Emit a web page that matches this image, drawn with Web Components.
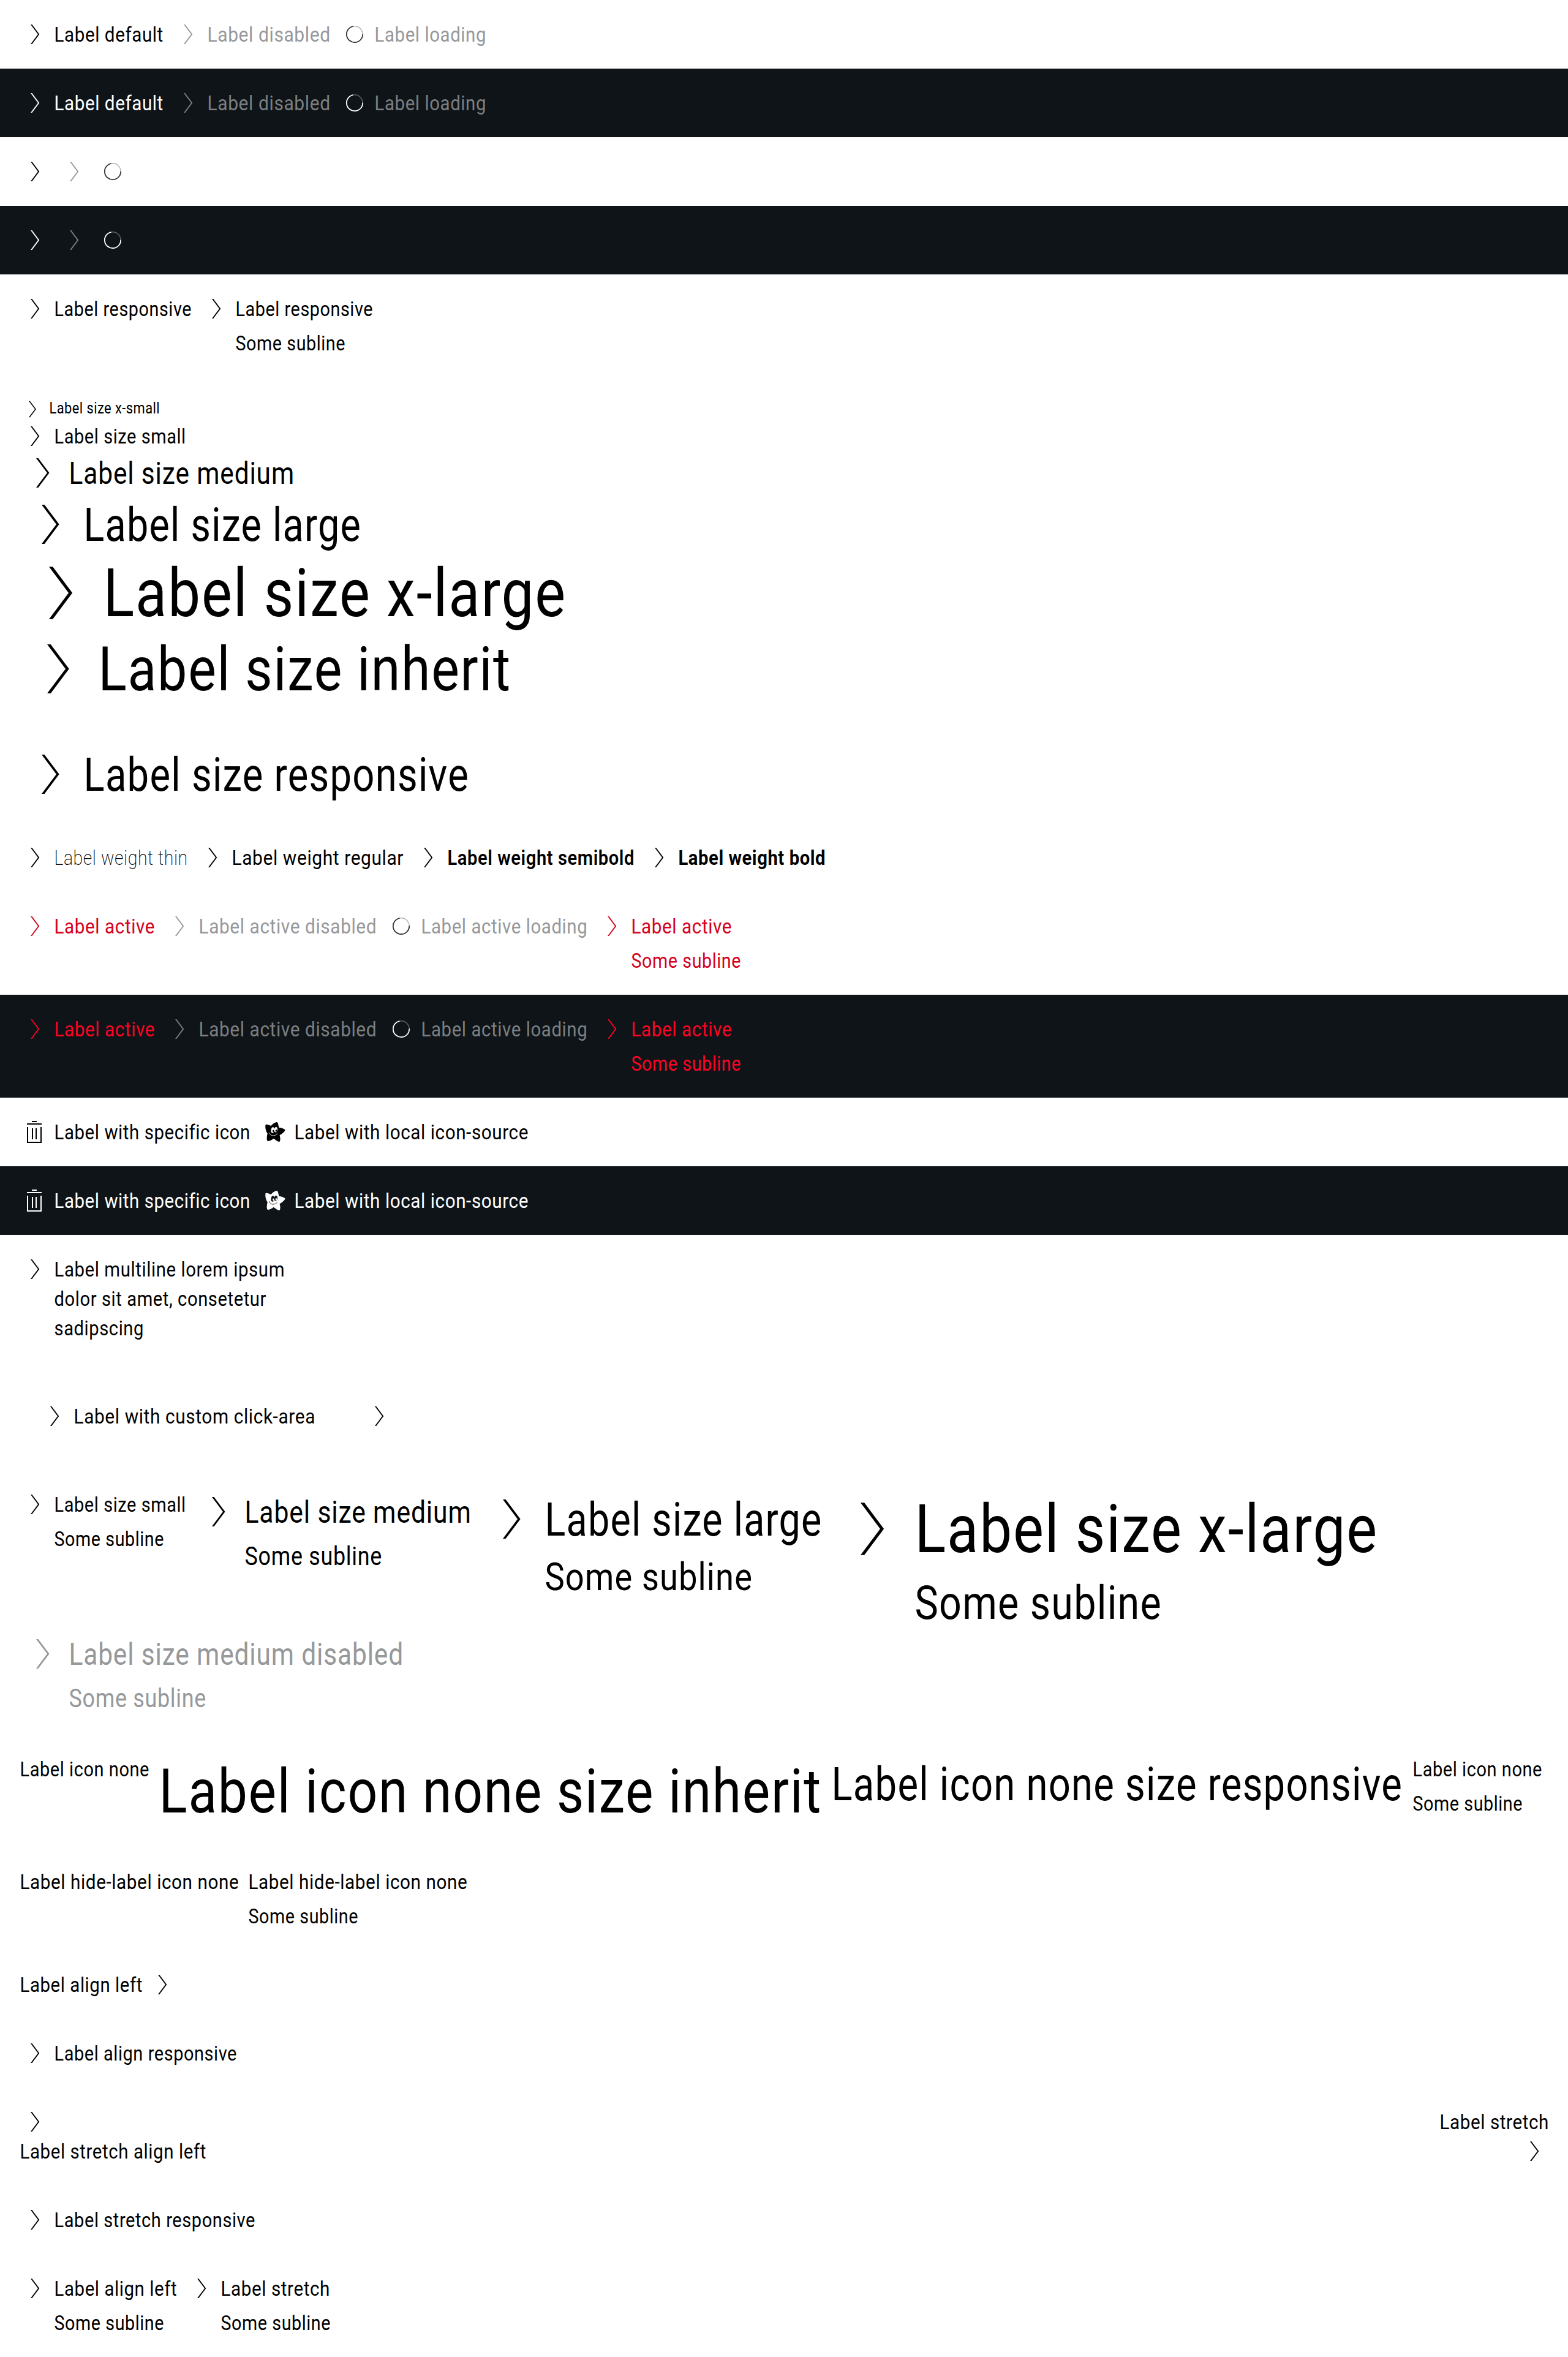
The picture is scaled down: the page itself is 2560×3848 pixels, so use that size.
<!DOCTYPE html>
<html lang="en">
<head>
<meta charset="utf-8">
<title>Link pure</title>
<style>
html, body { margin: 0; padding: 0; background: #fff; }
body { font-family: Roboto, "Liberation Sans", sans-serif; }
</style>
</head>
<body>
<link-gallery></link-gallery>
<script>
// Text run set to a fixed advance width.
class FitText extends HTMLElement {
  connectedCallback() {
    const w = parseFloat(this.getAttribute('w'));
    const root = this.attachShadow({ mode: 'open' });
    root.innerHTML = `<style>
      :host { display: block; width: ${w}px; height: 1lh; white-space: nowrap; }
      span { display: inline-block; vertical-align: top; font-size: 1.05em; letter-spacing: .02em; transform-origin: 0 0; }
    </style><span><slot></slot></span>`;
    const run = root.querySelector('span');
    const natural = run.getBoundingClientRect().width;
    if (natural > 0) run.style.transform = `translate(.5px, 1px) scaleX(${(w + 0.5) / natural})`;
  }
}

const ICONS = {
  arrow: '<path fill="currentColor" d="M18 8h2.3l12 16-12 16H18l12-16z"/>',
  trash: '<path fill="currentColor" d="M20 6h8v2h-8zM12 10h24v2H12zM12 16h2v24h20V16h2v26H12zM20 18h2v18h-2zM26 18h2v18h-2z"/>',
  star: '<path fill="currentColor" d="M9.400 13.200C9.200 11 12 11.400 18.500 14C21 11.500 23.500 9 27.300 8.100C29.800 7.800 30 10.500 31.500 17C35 17.300 39 18.200 41.300 20.200C42.500 21.500 38 26.500 32.500 29.300C33.600 33 34 36 33 39.300C31.500 41.300 27 38 22.800 34.800C20 37 16 39.400 13 38.900C11.200 38 11.300 32 12.800 26.500C10.500 23.500 8.800 18 9.400 13.200Z"/><g fill="var(--surface)"><ellipse cx="21.300" cy="21" rx="2.700" ry="4.800" transform="rotate(8 21.300 21)"/><ellipse cx="26.400" cy="20.300" rx="2.500" ry="4.300" transform="rotate(8 26.400 20.300)"/></g><g fill="currentColor"><ellipse cx="22.300" cy="22.600" rx="1.300" ry="2"/><ellipse cx="26.900" cy="22" rx="1.200" ry="1.900"/></g><path d="M15.800 25.200C17 31.500 25 31.500 29.200 26.500" fill="none" stroke="var(--surface)" stroke-width=".9"/>',
  loading: '<circle cx="24" cy="24" r="13.200" fill="none" stroke="var(--track)" stroke-width="1.500"/><path d="M37.200 23.500A13.200 13.200 0 1 1 21.500 11" fill="none" stroke="var(--spin)" stroke-width="1.700"/>'
};

class UiIcon extends HTMLElement {
  connectedCallback() {
    this.attachShadow({ mode: 'open' }).innerHTML = `<style>
      :host { display: block; flex: none; width: var(--icon); height: var(--icon); }
      svg { display: block; width: 100%; height: 100%; }
    </style><svg viewBox="0 0 48 48" aria-hidden="true">${ICONS[this.getAttribute('name')]}</svg>`;
  }
}

class UiLink extends HTMLElement {
  connectedCallback() {
    const icon = this.getAttribute('icon') || 'arrow';
    this.attachShadow({ mode: 'open' }).innerHTML = `<style>
      :host { display: flex; gap: 8px; align-items: flex-start; flex: none;
        --icon: 48px; font-size: 32px; line-height: 48px; color: var(--ink); }
      :host([size="xs"]) { --icon: 40px; font-size: 24px; line-height: 36px; }
      :host([size="m"]) { --icon: 72px; font-size: 48px; line-height: 72px; --sub: 40px; --subline: 56px; }
      :host([size="l"]) { --icon: 96px; font-size: 72px; line-height: 96px; --sub: 60px; --subline: 76px; }
      :host([size="xl"]) { --icon: 128px; font-size: 104px; line-height: 128px; --sub: 72px; --subline: 96px; }
      :host([size="inherit"]) { --icon: 120px; font-size: 96px; line-height: 120px; }
      :host([tone="disabled"]), :host([icon="loading"]) { color: var(--muted); }
      :host([tone="active"]) { color: var(--accent); }
      :host([weight="thin"]) { font-weight: 200; }
      :host([weight="semibold"]) { font-weight: 600; }
      :host([weight="bold"]) { font-weight: 700; }
      :host([align="left"]) { flex-direction: row-reverse; }
      :host([area]) { padding: 32px; }
      :host([split]) { flex-direction: column; gap: 0; }
      :host([split="end"]) { flex-direction: column-reverse; align-items: flex-end; }
      .text { display: flex; flex-direction: column; }
      ::slotted([slot="sub"]) { font-size: var(--sub, 32px); line-height: var(--subline, 48px); margin-top: 8px; }
    </style>${icon === 'none' ? '' : `<ui-icon name="${icon}"></ui-icon>`}${
      this.childElementCount ? '<div class="text"><slot></slot><slot name="sub"></slot></div>' : ''}`;
  }
}

class DemoRow extends HTMLElement {
  connectedCallback() {
    this.attachShadow({ mode: 'open' }).innerHTML = `<style>
      :host { display: flex; align-items: flex-start; gap: 16.2px; padding: 32px; box-sizing: border-box;
        background: var(--surface); --surface: #fff; --ink: #000; --muted: #96989a; --accent: #d5001c;
        --track: #b4b5b6; --spin: #323639; }
      :host([theme="dark"]) { --surface: #0e1418; --ink: #fff; --muted: #7c7f81; --accent: #ff0223;
        --track: #5f6365; --spin: #fff; }
      :host([stack]) { flex-direction: column; gap: 0; }
      :host([spread]) { justify-content: space-between; }
      :host([flush]) { padding-bottom: 0; }
    </style><slot></slot>`;
  }
}

const sub = (w = 179) => `<fit-text slot="sub" w="${w}">Some subline</fit-text>`;
const link = (text, w, attrs = '', extra = '') => `<ui-link ${attrs}><fit-text w="${w}">${text}</fit-text>${extra}</ui-link>`;
const row = (items, attrs = '') => `<demo-row ${attrs}>${items.join('')}</demo-row>`;
const DARK = 'theme="dark"', OFF = 'tone="disabled"', SPIN = 'icon="loading"', ON = 'tone="active"', NONE = 'icon="none"';

const basics = [link('Label default', 177.9), link('Label disabled', 200.7, OFF), link('Label loading', 182, SPIN)];
const bare = ['<ui-link></ui-link>', `<ui-link ${OFF}></ui-link>`, `<ui-link ${SPIN}></ui-link>`];
const active = [link('Label active', 164.1, ON), link('Label active disabled', 290.2, OFF),
  link('Label active loading', 271.3, SPIN), link('Label active', 164.1, ON, sub())];
const icons = [link('Label with specific icon', 319.800, 'icon="trash"'), link('Label with local icon-source', 382, 'icon="star"')];

class LinkGallery extends HTMLElement {
  connectedCallback() {
    this.attachShadow({ mode: 'open' }).innerHTML = `<style>:host { display: flex; flex-direction: column; }</style>` + [
      row(basics), row(basics, DARK), row(bare), row(bare, DARK),
      row([link('Label responsive', 224), link('Label responsive', 224, '', sub())]),
      row([link('Label size x-small', 180, 'size="xs"'), link('Label size small', 214.7),
        link('Label size medium', 368, 'size="m"'), link('Label size large', 453, 'size="l"'),
        link('Label size x-large', 756, 'size="xl"'), link('Label size inherit', 674, 'size="inherit"')], 'stack'),
      row([link('Label size responsive', 629, 'size="l"')]),
      row([link('Label weight thin', 217.7, 'weight="thin"'), link('Label weight regular', 280.1),
        link('Label weight semibold', 305, 'weight="semibold"'), link('Label weight bold', 240, 'weight="bold"')]),
      row(active), row(active, DARK), row(icons), row(icons, DARK),
      row([link('Label multiline lorem ipsum', 376, '', '<fit-text w="346">dolor sit amet, consetetur</fit-text><fit-text w="146">sadipscing</fit-text>')]),
      row([link('Label with custom click-area', 394, 'area'), '<ui-link area></ui-link>']),
      row([link('Label size small', 214.7, '', sub()), link('Label size medium', 369.700, 'size="m"', sub(224)),
        link('Label size large', 452.500, 'size="l"', sub(339)), link('Label size x-large', 756, 'size="xl"', sub(403))], 'flush'),
      row([link('Label size medium disabled', 546, 'size="m" ' + OFF, sub(224))], 'style="padding-top:0"'),
      row([link('Label icon none', 211, NONE), link('Label icon none size inherit', 1082, NONE + ' size="inherit"'),
        link('Label icon none size responsive', 932, NONE + ' size="l"'), link('Label icon none', 211, NONE, sub())]),
      row([link('Label hide-label icon none', 357.300, NONE), link('Label hide-label icon none', 357.300, NONE, sub())]),
      row([link('Label align left', 200, 'align="left"')]),
      row([link('Label align responsive', 298)]),
      row([link('Label stretch align left', 304, 'split'), link('Label stretch', 178, 'split="end"')], 'spread'),
      row([link('Label stretch responsive', 328)]),
      row([link('Label align left', 200.3, '', sub()), link('Label stretch', 178, '', sub())])
    ].join('');
  }
}

customElements.define('demo-row', DemoRow);
customElements.define('ui-icon', UiIcon);
customElements.define('ui-link', UiLink);
customElements.define('link-gallery', LinkGallery);
customElements.define('fit-text', FitText);
</script>
</body>
</html>
